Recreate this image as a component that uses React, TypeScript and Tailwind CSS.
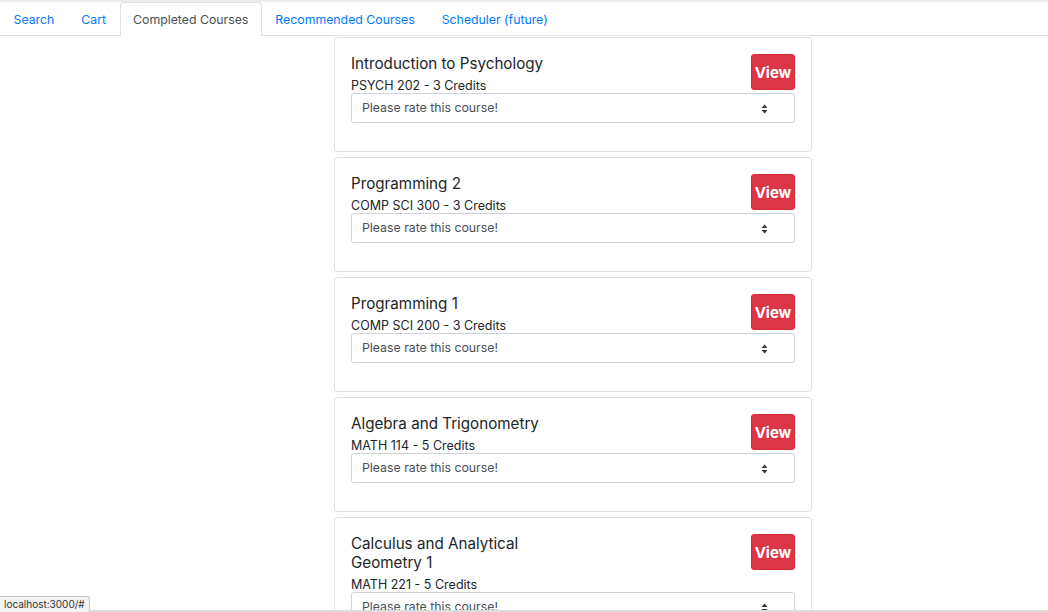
import React from 'react';

const courses = [
  { title: 'Introduction to Psychology', code: 'PSYCH 202', credits: 3 },
  { title: 'Programming 2', code: 'COMP SCI 300', credits: 3 },
  { title: 'Programming 1', code: 'COMP SCI 200', credits: 3 },
  { title: 'Algebra and Trigonometry', code: 'MATH 114', credits: 5 },
  { title: 'Calculus and Analytical Geometry 1', code: 'MATH 221', credits: 5 },
];

const tabs = ['Search', 'Cart', 'Completed Courses', 'Recommended Courses', 'Scheduler (future)'];

const SortArrows = () => (
  <svg width="7" height="10" viewBox="0 0 7 10" fill="#343a40">
    <path d="M3.5 0.5 L6.5 4 H0.5 Z" />
    <path d="M3.5 9.5 L6.5 6 H0.5 Z" />
  </svg>
);

const CourseCard: React.FC<{ title: string; code: string; credits: number }> = ({ title, code, credits }) => (
  <div className="border border-[#dfdfdf] rounded-[4px] bg-white pt-[16px] px-[16px] pb-[28px]">
    <div className="flex items-start justify-between">
      <div className="w-[200px]">
        <h5 className="text-[15.2px] leading-[19px] text-[#212529]">{title}</h5>
        <p className="mt-[5px] text-[12.5px] leading-[15px] text-[#212529]">
          {code} - {credits} Credits
        </p>
      </div>
      <button className="w-[44px] h-[36px] rounded-[3px] bg-[#dc3545] border border-[#d52a3b] text-white font-bold text-[15px] leading-none">
        View
      </button>
    </div>
    <div className="h-[30px] border border-[#ced4da] rounded-[3px] flex items-center justify-between pl-[10px] pr-[26px] pt-[1px] text-[12.3px] text-[#495057]">
      <span>Please rate this course!</span>
      <SortArrows />
    </div>
  </div>
);

export default function App() {
  return (
    <div className="min-h-screen bg-white font-['Inter','Liberation_Sans',sans-serif]">
      <div className="h-[2px] bg-[#ececec]" />
      <nav className="flex border-b border-[#dee2e6] h-[34px]">
        {tabs.map(t => {
          const active = t === 'Completed Courses';
          return (
            <div
              key={t}
              className={
                active
                  ? 'px-[12.5px] pt-[2px] h-[34px] flex items-center text-[12.3px] text-[#495057] bg-white border border-b-0 border-[#dee2e6] rounded-t-[4px] mb-[-1px]'
                  : 'px-[12.5px] pt-[2px] h-[34px] flex items-center text-[12.3px] text-[#007bff] border border-transparent'
              }
            >
              {t}
            </div>
          );
        })}
      </nav>
      <div className="ml-[334px] w-[478px] mt-[1px] flex flex-col gap-[5px]">
        {courses.map(c => (
          <CourseCard key={c.code + c.title} {...c} />
        ))}
      </div>
      <div className="fixed left-0 right-0 bottom-0 h-[2px] bg-[#dcdcdc]" />
      <div className="fixed left-0 bottom-0 h-[16px] px-[4px] flex items-center bg-[#f3f3f3] border border-l-0 border-b-0 border-[#c6c6c6] rounded-tr-[3px] text-[10px] text-[#333]">
        localhost:3000/#
      </div>
    </div>
  );
}
